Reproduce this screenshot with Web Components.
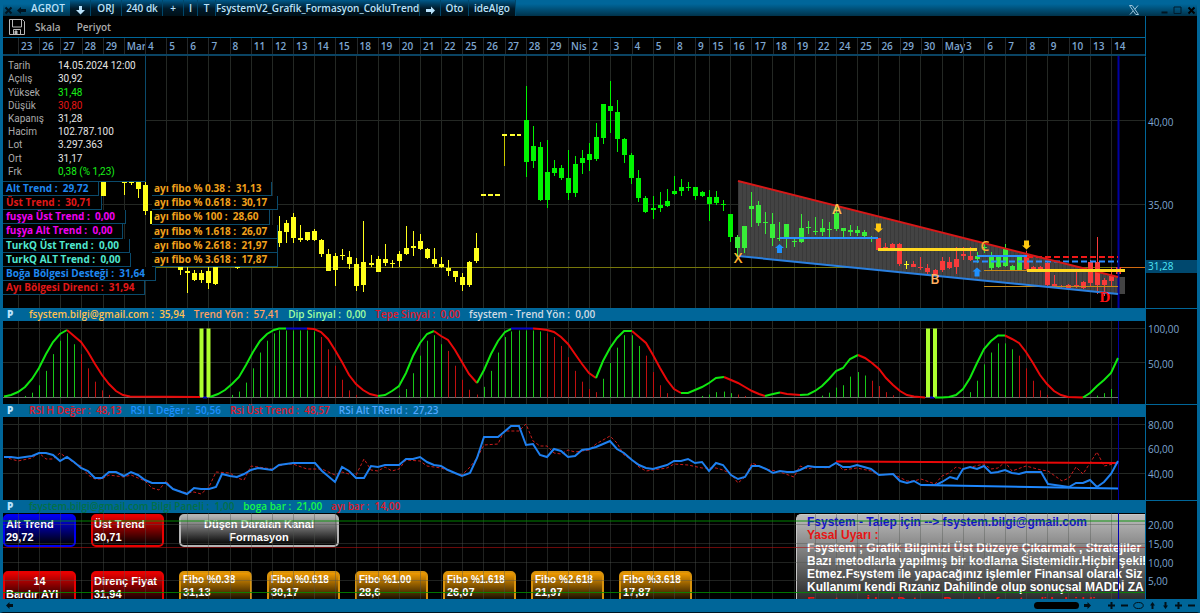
<!DOCTYPE html>
<html lang="tr">
<head>
<meta charset="utf-8">
<title>AGROT 240 dk - FsystemV2</title>
<style>
html, body { margin: 0; height: 100%; background: #000; }
body { font-family: "Open Sans", "Noto Sans", sans-serif; font-size: 10px; }
</style>
</head>
<body>
<app-window></app-window>
<script>
const BLUE = '#006699', LINE = '#0a4a6b';
const make = (tag, html) => customElements.define(tag, class extends HTMLElement {
  connectedCallback() {
    if (this.shadowRoot) return;
    this.attachShadow({ mode: 'open' }).innerHTML = typeof html === 'function' ? html(this) : html;
  }
});

/* ---------- shared chart geometry: one bar every 7.05 units ---------- */
const barX = i => 18 + 7.05 * i;
const days = [];
for (let i = 0; i <= 96; i += 3) days.push(i);
for (let i = 98; i <= 155; i += 3) days.push(i);
const vgrid = (y1, y2) => `<path class="grid" d="${days.map(i => `M${Math.round(barX(i)) + .5} ${y1}V${y2}`).join('')}"/>`;
const hgrid = ys => `<path class="grid" d="${ys.map(y => `M3 ${y}H1145`).join('')}"/>`;
const poly = (pts, color, w = 2, extra = '') => `<polyline points="${pts}" stroke="${color}" stroke-width="${w}" ${extra}/>`;
const svgBox = (y, h, inner) => `<svg viewBox="3 ${y} 1142 ${h}" preserveAspectRatio="none" aria-hidden="true">${inner}</svg>`;
const svgCss = `
  svg { position: absolute; inset: 0; width: 100%; height: 100%; display: block; fill: none; pointer-events: none; }
  svg * { vector-effect: non-scaling-stroke; }
  .grid { stroke: #242824; stroke-width: 1; }`;

/* ---------- title bar ---------- */
make('title-bar', `
<style>
:host { display: flex; height: 16px; background: linear-gradient(#00669a 25%, #00324a); color: #b9e2fb; }
button { all: unset; box-sizing: border-box; flex: none; height: 16px; line-height: 17px; text-align: center; font-size: 10px; font-weight: 600; cursor: pointer;
  background: linear-gradient(#00598a, #001a2a 55%, #001018); border-right: 1px solid #00476b; white-space: nowrap; }
button.bare { background: none; border: 0; }
svg { display: block; margin: 4px auto 0; width: 9px; height: 9px; }
.gap { flex: 1; }
</style>
<button class="bare" style="width:16px" aria-label="Kapat"><svg viewBox="0 0 9 9"><path d="M1.5 1.500l6 6M7.500 1.500l-6 6" stroke="#001420" stroke-width="2"/></svg></button>
<button class="bare" style="width:10px" aria-label="Geri"><svg viewBox="0 0 9 9"><path d="M0 4.500l4-3.500v2h5v3H4v2z" fill="#001420"/></svg></button>
<button class="bare" style="width:44px">AGROT</button>
<button style="width:21px" aria-label="Sembol"><svg viewBox="0 0 9 9"><path d="M3 0h3v4h3L4.500 8.500 0 4h3z" fill="#b9e2fb"/></svg></button>
<button style="width:31px">ORJ</button>
<button style="width:41px">240 dk</button>
<button style="width:21px">+</button>
<button style="width:14px">I</button>
<button style="width:18px">T</button>
<button style="width:204px">FsystemV2_Grafik_Formasyon_CokluTrend</button>
<button style="width:21px" aria-label="İleri"><svg viewBox="0 0 9 9"><path d="M9 4.500L5 .5V3H0v3h5v2.500z" fill="#b9e2fb"/></svg></button>
<button style="width:28px">Oto</button>
<button style="width:47px">ideAlgo</button>
<span class="gap"></span>
<button class="bare" style="width:46px" aria-label="X"><svg style="width:10px;height:10px;margin-top:3px" viewBox="0 0 10 10"><path d="M.5.5h2.700l6.300 9H6.800zM9 .5L5.800 4.300M4.300 5.800L1 9.500" fill="none" stroke="#9cc4da" stroke-width="1"/></svg></button>
<button class="bare" style="width:14px" aria-label="Küçült"><svg viewBox="0 0 9 9"><path d="M1.500 6.500h6" stroke="#001420" stroke-width="2"/></svg></button>
<button class="bare" style="width:12px" aria-label="Büyüt"><svg viewBox="0 0 9 9"><path d="M1 1h7v6.500H1z" fill="none" stroke="#001a2a"/></svg></button>
<button class="bare" style="width:17px" aria-label="Pencereyi kapat"><svg viewBox="0 0 9 9"><path d="M1.500 1.500l6 6M7.500 1.500l-6 6" stroke="#000" stroke-width="2"/></svg></button>
`);

make('tool-bar', `
<style>
:host { display: flex; align-items: center; gap: 16px; height: 22px; padding-left: 6px; box-sizing: border-box; color: #aaa; border-bottom: 1px solid ${BLUE}; }
button { all: unset; font-size: 10px; font-weight: 600; line-height: 16px; cursor: pointer; }
.save { margin-right: -6px; }
svg { display: block; width: 16px; height: 16px; }
</style>
<button class="save" aria-label="Kaydet"><svg viewBox="0 0 16 16" fill="none" stroke="#b8b8b8"><path d="M.5.5h13l2 2v13H.5zM3.500.5v7.500h9V.5M4.500 15.500v-5h7v5"/><path d="M6 12v3.500h2V12z" fill="#b8b8b8"/></svg></button>
<button>Skala</button>
<button>Periyot</button>
`);

const dayNames = '23 26 27 28 29 Mar 4 5 6 7 8 11 12 13 14 15 18 19 20 21 22 25 26 27 28 29 Nis 2 3 4 5 8 9 15 16 17 18 19 22 24 25 26 29 30 May 3 6 7 8 9 10 13 14'.split(' ');
make('date-axis', () => `
<style>
:host { display: flex; height: 18px; box-sizing: border-box; border-bottom: 2px solid #0a4464; color: #7ea6d0; font-weight: 600; font-size: 10px; line-height: 17px; }
span { flex: 3 0 0; min-width: 0; box-shadow: inset 1px 0 #24282a; text-indent: 3px; white-space: nowrap; }
span.short { flex-grow: 2; }
i { flex: 2.130 0 0; }
span:last-child { flex-grow: 4.750; }
</style><i></i>${dayNames.map((d, k) => `<span${k === 32 ? ' class="short"' : ''}>${d}</span>`).join('')}`);

/* ---------- panel: header, drawing area, value axis ---------- */
make('chart-panel', el => {
  const y = +el.dataset.y, h = +el.dataset.h;
  const ticks = (el.dataset.ticks || '').split(' ').filter(Boolean).map(t => t.split('@'));
  return `
<style>
:host { display: grid; grid-template-columns: minmax(0, 1fr) 52px; flex: ${h} 1 ${el.hasAttribute('plain') ? 0 : 13}px; min-height: 0; }
.left { display: flex; flex-direction: column; min-height: 0; }
header { display: flex; gap: 9px; height: 13px; flex: none; background: ${BLUE}; color: #b9e2fb; font-weight: 600; font-size: 10px; line-height: 13px; padding-left: 4px; white-space: pre; overflow: hidden; }
header b { width: 13px; }
.area { position: relative; flex: 1; min-height: 0; overflow: hidden; }
aside { border-left: 1px solid ${BLUE}; border-top: 1px solid ${BLUE}; padding-top: ${el.hasAttribute('plain') ? 0 : 12}px; color: #7ea6d0; font-size: 10px; font-weight: 500; display: flex; }
.scale { position: relative; flex: 1; }
.scale span { position: absolute; left: 2px; line-height: 14px; margin-top: -7px; }
.scale span.now { left: 0; right: 0; padding-left: 2px; line-height: 13px; background: #00486e; color: #4fe6f6; }
:host([plain]) aside { border-top-color: transparent; }
</style>
<div class="left">
${el.hasAttribute('plain') ? '' : '<header><b>P</b><slot name="head"></slot></header>'}
<div class="area"><slot></slot></div></div>
<aside><div class="scale">${ticks.map(([t, ty]) => `<span class="${t === '31,28' ? 'now' : ''}" style="top:${((ty - y) / h * 100).toFixed(2)}%">${t}</span>`).join('')}</div></aside>`;
});

/* ---------- price drawing: bar index, high, top, bottom, low ---------- */
const Y = [[12,182,182,196,196],[15,182,182,183,195],[16,182,182,183,185],[17,182,182,189,198],[18,182,185,211,215],[19,211,211,224,233],
[23,267,267,270,275],[24,267,271,273,293],[25,270,273,280,281],[26,270,273,280,283],[27,267,271,283,289],[28,267,267,284,285],[31,267,267,268,269],
[37,216,231,243,247],[38,220,223,232,243],[39,213,217,238,243],[40,225,238,240,242],[41,232,232,240,241],[42,229,231,240,241],[43,239,240,254,257],[44,249,254,271,271],
[45,253,256,270,286],[46,249,255,255,260],[47,251,257,264,269],[48,258,264,286,291],[49,221,262,285,292],[50,255,263,265,267],[51,256,259,272,272],[52,244,259,263,266],
[53,260,263,264,268],[54,251,254,261,267],[55,226,248,254,255],[56,231,246,248,256],[57,234,241,249,250],[58,248,249,258,259],[59,248,259,264,267],[60,257,264,267,268],
[61,260,268,271,276],[62,271,271,277,282],[63,273,277,285,291],[64,261,262,285,287],[65,233,248,261,263],[126,261,264,265,269]];
const G = [[72,86,120,162,177],[73,126,146,161,168],[74,142,147,200,201],[75,140,172,200,208],[76,160,168,173,176],[77,165,168,178,180],[78,150,178,193,200],[79,156,164,193,197],
[80,150,158,163,174],[81,143,154,160,171],[82,123,137,159,161],[83,104,104,138,144],[84,81,106,111,133],[85,100,112,139,152],[86,138,139,155,163],[87,153,155,178,184],[88,170,178,198,202],
[89,196,198,212,213],[90,196,208,210,219],[91,192,205,208,212],[92,189,201,206,207],[93,176,191,194,195],[94,179,187,191,196],[95,182,187,187,191],[96,187,187,196,200],[97,191,192,196,197],
[98,190,197,204,221],[99,191,197,203,205],[100,200,204,205,211],[101,214,214,237,242],[102,235,237,248,256],[103,226,226,248,253],[104,192,206,209,227],[105,201,205,223,226],[106,212,222,223,234],
[107,213,224,238,246],[108,222,238,239,241],[109,224,224,238,248],[110,238,241,242,247],[111,214,228,242,243],[112,221,227,228,234],[113,217,231,232,235],[114,219,228,232,236],[115,222,229,230,239],
[116,205,213,229,231],[117,228,228,231,239],[118,225,230,232,236],[119,226,230,233,236],[120,230,232,236,238],[121,236,237,238,242],[136,252,256,259,263],[137,244,247,248,253],[138,252,256,268,270],
[139,256,257,267,268],[140,244,249,266,267],[141,265,266,270,271],[142,256,257,270,271]];
const R = [[122,238,238,250,251],[123,243,247,248,251],[124,243,244,249,251],[125,243,244,264,266],[127,261,264,267,267],[128,257,267,268,270],[129,264,268,272,274],[130,269,270,274,274],[131,257,261,270,272],
[132,257,262,268,269],[133,247,259,267,274],[134,247,254,256,260],[135,247,256,260,261],[143,251,255,269,270],[144,266,267,269,269],[145,266,267,269,269],[146,261,263,285,286],[147,275,284,286,287],
[148,285,286,287,288],[149,284,285,288,288],[150,271,285,286,288],[151,281,282,288,289],[152,260,262,283,287],[153,237,262,285,294],[154,278,280,285,296],[155,267,276,281,287],[156,264,267,274,276]];
const candles = (list, color) => `<g stroke="${color}" fill="${color}">` + list.map(([i, h, t, b, l]) => {
  const x = Math.round(barX(i)) - .5;
  return `<path d="M${x} ${h}V${l}"/><rect x="${x - 2.5}" y="${t}" width="5" height="${Math.max(1, b - t)}" stroke="none"/>`;
}).join('') + '</g>';
const down = (x, y) => `<path fill="#ffc810" d="M${x - 2.5} ${y - 4.5}h5v5h2l-4.500 4-4.500-4h2z"/>`;
const up = (x, y) => `<path fill="#1e90ff" d="M${x - 2.5} ${y + 4.5}h5v-5h2l-4.500-4-4.500 4h2z"/>`;

make('price-chart', () => {
  let hatch = '';
  for (let x = 738; x < 1118; x += 4) hatch += `M${x}.5 ${181 + (x - 738) * .253}V${256 + (x - 738) * .1}`;
  const marks = [['X', 738, 258, '#ffb52e'], ['A', 837, 209, '#ffc04d'], ['B', 935, 279, '#ffb060'], ['C', 985, 246, '#ffa52e'], ['D', 1105, 297, '#ff1010']];
  return `<style>
:host { display: block; position: absolute; inset: 0; }
${svgCss}
.mark { position: absolute; transform: translate(-50%, -50%); font-size: 14px; line-height: 16px; font-weight: 600; }
.mark.d { font-family: "Liberation Serif", serif; font-weight: 700; font-size: 15px; }
</style>` + svgBox(56, 252, `
${vgrid(56, 308)}${hgrid([120.5, 204.5])}
<path d="M3 267.500H1118" stroke="#77770a"/><path d="M1118 267.500H1145" stroke="#d06a10"/>
<path d="M738 181L1118 277H1125V294H1118L738 256z" fill="#434343"/>
<path d="${hatch}" stroke="#393939"/>
<g transform="translate(1 0)">${candles(Y, '#ffff1c')}
${candles(G.filter(c => c[0] < 102), '#00f400')}${candles(G.filter(c => c[0] >= 102), '#38ee38')}${candles(R, '#f83a3a')}</g>
<path d="M504.500 134V166" stroke="#c8c800"/>
<path d="M481 195H486M488 195H493M495 195H500M502 135H507M510 135H515M517 135H521" stroke="#ffff30" stroke-width="2"/>
<path d="M1118.500 56V308" stroke="#0000a0" stroke-width="2"/>
<path d="M984 286.500H1118M984 270.500H1027" stroke="#c88a18"/>
<path d="M1027 257H1118" stroke="#f01818" stroke-width="2" stroke-dasharray="6 3"/>
<path d="M973 261.500H1118" stroke="#2a8cff" stroke-width="2" stroke-dasharray="6 3"/>
<path d="M738 181L1118 277" stroke="#d81818" stroke-width="2"/><path d="M738 256L1118 294" stroke="#2a80e0" stroke-width="2"/>
<path d="M780 238H878M977 256H1027" stroke="#2a90ff" stroke-width="2"/>
<path d="M878 249.500H977M1027 270.500H1125" stroke="#ffd820" stroke-width="3"/>
${down(878.5, 228)}${down(1026.5, 245)}${up(779.5, 248.5)}${up(977, 272)}`)
  + marks.map(([t, x, y, c]) => `<span class="mark ${t.toLowerCase()}" style="left:${((x - 3) / 11.42).toFixed(2)}%;top:${((y - 56) / 2.52).toFixed(2)}%;color:${c}">${t}</span>`).join('');
});

make('quote-info', `
<style>
:host { display: block; position: absolute; left: 0; top: 0; width: 143px; height: 126px; box-sizing: border-box; background: #000; border-right: 1px solid ${LINE}; border-bottom: 1px solid ${LINE}; color: #aaa; }
dl { margin: 0; height: 119px; padding: 3px 0 0 5px; display: grid; grid-template-columns: 50px 1fr; grid-auto-rows: 1fr; align-items: center; font: 400 10px/13px Roboto, "Liberation Sans", sans-serif; }
dd { margin: 0; color: #e4e4e4; } .up { color: #18f018; } .dn { color: #e41414; }
</style>
<dl><dt>Tarih</dt><dd>14.05.2024 12:00</dd><dt>Açılış</dt><dd>30,92</dd><dt>Yüksek</dt><dd class="up">31,48</dd><dt>Düşük</dt><dd class="dn">30,80</dd>
<dt>Kapanış</dt><dd>31,28</dd><dt>Hacim</dt><dd>102.787.100</dd><dt>Lot</dt><dd>3.297.363</dd><dt>Ort</dt><dd>31,17</dd><dt>Frk</dt><dd class="up">0,38 (% 1,23)</dd></dl>`);

make('trend-list', el => {
  const fibo = el.hasAttribute('fibo');
  const rows = fibo
    ? ['0.38 :  31,13', '0.618 :  30,17', '100 :  28,60', '1.618 :  26,07', '2.618 :  21,97', '3.618 :  17,87'].map(t => ['ayı fibo % ' + t, '#f0a01c'])
    : [['Alt Trend :  29,72', '#1e88f0'], ['Üst Trend :  30,71', '#e01818'], ['fuşya Üst Trend :  0,00', '#f000f0'], ['fuşya Alt Trend :  0,00', '#f000f0'],
       ['TurkQ Üst Trend :  0,00', '#50e8d0'], ['TurkQ ALT Trend :  0,00', '#50e8d0'], ['Boğa Bölgesi Desteği :  31,64', '#1e88f0'], ['Ayı Bölgesi Direnci :  31,94', '#e01818']];
  return `<style>
:host { position: absolute; top: 126px; left: ${fibo ? 149 : 0}px; height: ${fibo ? 85 : 113}px; display: grid; grid-auto-rows: 1fr; justify-items: start; font-size: 10px; font-weight: 700; line-height: 13px; white-space: pre; }
span { background: #000; border: solid ${LINE}; border-width: 0 1px 1px 0; padding: 0 10px 0 ${fibo ? 2 : 3}px; box-sizing: border-box; }
</style>${rows.map(([t, c]) => `<span style="color:${c}">${t}</span>`).join('')}`;
});

/* ---------- oscillator ---------- */
const waves = [
['g','4,396.5 11,395 18,392 25,387 32,379 39,368 46,354 53,342 60,334 67,330'],['r','67,330 74,336 81,342 88,352 95,364 102,375 109,384 116,391 123,395 130,396.5 200,397'],
['g','210,397 218,394 225,390 232,384 239,377 246,365 253,352 260,341 267,334 274,330 279,328.5 286,328.5'],['b','286,328.5 293,328.5 300,328.5 307,328.5'],
['r','307,328.5 314,329 321,332 328,339 335,350 342,362 349,375 356,384 363,390 370,394 378,396'],['g','378,396 385,395 392,391 399,386 406,373 413,356 420,343 427,334 434,331'],
['r','434,331 441,336 448,340 455,350 462,362 469,374 477,383'],['g','477,383 484,370 491,354 498,341 505,332 511,329'],['b','511,328.5 519,328.5 526,328.5 533,328.5'],
['r','533,328.5 540,329 547,330 554,332 561,337 568,344 575,354 582,364 589,373 596,378'],['g','596,378 603,361 610,348 617,338 624,331 632,331'],
['r','632,331 639,337 646,343 653,355 660,368 667,380 674,389 681,393'],['g','681,393 688,393 695,390 702,387 709,383 716,378 724,377'],
['r','724,377 731,380 738,383 745,387 752,391 759,394 765,396'],['g','765,396 773,394 780,392.5'],['r','780,392.5 787,394 800,395'],
['g','800,395 808,394.5 815,391 822,386 829,379 836,371 843,368 850,359 858,355'],['r','858,355 865,358 872,363 879,369 886,378 893,385 900,391 907,395 914,396.5 925,397.5'],
['g','935,397.5 942,397.5 949,397 956,395 963,389 970,378 977,363 984,349 991,341 998,335.5 1005,335.5'],['r','1005,335.5 1012,339 1019,343 1026,352 1033,363 1040,375 1047,384 1054,391 1061,395 1068,397 1083,397.5'],
['g','1083,397.5 1090,393 1097,386 1104,380 1111,373 1118,358']];
make('wave-chart', () => {
  const ink = { g: '#10e810', r: '#e80808', b: '#0808c8' };
  let bars = '';
  for (const [c, pts] of waves) pts.split(' ').slice(1).forEach((p, n) => {
    const [x, y] = p.split(',').map(Number), v = (397.5 - y) ** 2 / 71;
    if (v > 1) bars += `<path d="M${Math.round(x) + .5} ${397.5 - v}V397.500" stroke="${c === 'r' && n ? '#c01010' : '#18c818'}"/>`;
  });
  return `<style>:host { display: block; position: absolute; inset: 0; }${svgCss}</style>` + svgBox(321, 83, `
${vgrid(321, 404)}${hgrid([328.5, 362.5])}<path d="M3 397.500H1118" stroke="#707070"/>${bars}
<path d="M1118.500 321V404" stroke="#0000a0"/>
<path d="M203 397.500h4M930 397.500h4" stroke="#0808c8" stroke-width="2"/>
<path d="M201.500 328.500V397M208.500 328.500V397M928 328.500V397M935 328.500V397" stroke="#adff2f" stroke-width="4"/>
${waves.map(([c, p]) => poly(p, ink[c])).join('')}`);
});

make('rsi-chart', () => `<style>:host { display: block; position: absolute; inset: 0; }${svgCss}</style>` + svgBox(417, 83, `
${vgrid(417, 500)}${hgrid([424.5, 448.5, 473.5])}<path d="M1118.500 417V500" stroke="#0000a0"/>
${poly('4,457 18,461 32,458 39,453 46,459 53,459 60,453 67,458 74,463 81,466 88,475 95,479 102,479 109,475 124,477 131,475 145,481 152,488 159,490 166,481 173,489 187,493 194,492 201,494 209,487 216,472 230,473 237,478 244,480 251,466 265,468 272,469 279,466 286,464 293,464 307,469 322,469 335,475 342,472 349,474 356,475 364,459 371,470 378,471 385,467 392,471 399,469 406,460 420,461 427,466 441,468 455,473 462,475 470,467 477,458 484,445 498,444 504,431 519,431 526,424 533,441 540,446 547,446 554,453 561,454 568,450 575,452 589,450 596,444 610,436 617,443 624,455 632,460 639,467 646,471 667,468 674,464 688,465 702,468 716,468 723,470 731,474 738,483 745,477 752,463 766,469 780,472 794,477 800,466 808,469 815,467 829,468 836,463 843,470 857,468 871,471 879,475 893,474 907,481 914,481 921,479 935,484 942,476 949,473 956,467 963,469 984,464 991,469 998,468 1005,462 1012,471 1026,466 1041,470 1048,471 1055,476 1062,481 1069,478 1076,467 1083,474 1090,463 1097,452 1104,466 1118,463', '#c81c1c', 1, 'stroke-dasharray="3 2"')}
${poly('836,461.5 1118,463', '#e80808')}${poly('921,485 1118,488.5', '#1e88ff')}
${poly('4,457 11,457 18,458 25,457 32,456 39,453 46,453 53,455 60,461 67,457 74,462 81,468 88,471 95,478 102,478 109,472 116,472 124,476 131,472 138,475 145,480 152,483 166,483 173,489 187,494 194,488 201,489 209,489 216,487 222,474 230,476 237,477 244,474 251,470 258,468 272,470 279,465 286,464 293,463 315,463 322,471 335,482 342,467 349,471 356,478 364,478 371,466 378,467 385,465 399,465 406,459 413,459 420,457 427,462 434,465 441,466 448,470 455,473 462,476 470,473 477,458 484,437 498,437 504,432 511,426 519,426 526,445 533,444 540,455 547,457 554,449 561,451 568,457 575,456 582,450 589,449 596,447 610,441 617,449 624,453 632,460 639,465 646,468 653,469 660,467 667,465 674,461 681,461 688,459 695,463 702,462 709,471 716,463 723,465 731,475 738,479 745,477 752,466 759,466 766,469 773,473 780,471 787,472 794,472 800,470 808,466 815,467 829,467 836,463 843,467 850,467 857,465 864,467 871,469 879,475 893,474 900,481 907,483 914,481 921,485 936,485 942,482 950,477 957,479 963,469 970,467 977,469 984,466 991,473 998,472 1005,470 1012,473 1019,474 1026,472 1041,472 1048,484 1055,485 1069,487 1076,483 1083,483 1090,480 1097,487 1104,482 1111,474 1118,461', '#1e80f0')}`));

/* ---------- information cards ---------- */
make('info-card', `
<style>
:host { --c: #f00; display: block; box-sizing: border-box; height: 33px; border: 2px solid var(--c); border-radius: 5px; background: linear-gradient(var(--c), #000); color: #fff;
  font: 700 11px/13px "Liberation Sans", sans-serif; padding: 2px 1px; white-space: nowrap; overflow: hidden; }
:host([tone="blue"]) { --c: #0000f0; } :host([tone="red"]) { --c: #e80000; }
:host([tone="gold"]) { --c: #f09a00; padding: 0 1px 0 2px; border-color: #d8920c; }
:host([tone="gray"]) { --c: #b4b4b4; text-align: center; }
</style><slot></slot>`);
make('card-board', () => `
<style>
:host { display: block; position: absolute; inset: 0; overflow: hidden; }
.cards { display: grid; grid-template-columns: repeat(8, 73px); column-gap: 15px; row-gap: 24px; padding-top: 1px; }
.wide { grid-column: 3 / span 2; width: 160px; } .next { grid-column-start: 1; } .mid { display: block; text-align: center; }
small { font-size: 10px; }
.legal { position: absolute; left: 793px; right: 0; top: 1px; height: 130px; box-sizing: border-box; border: solid #c8c8c8; border-width: 1px 0 0 1px; border-radius: 5px 0 0 0;
  background: linear-gradient(#bcbcbc, #000 110px); color: #fff; font: 700 12px/13px "Liberation Sans", sans-serif; padding: 1px 0 0 10px; white-space: nowrap; overflow: hidden; }
.legal p { margin: 0; } .legal a { color: #1010d0; text-decoration: none; } .red { color: #e81414; } .legal .last { margin-top: 2px; }
${svgCss} .grid { stroke: rgba(80, 84, 80, .4); }
</style>
<div class="cards">
<info-card tone="blue">Alt Trend<br>29,72</info-card><info-card tone="red">Üst Trend<br>30,71</info-card>
<info-card tone="gray" class="wide">Düşen Daralan Kanal<br>Formasyon</info-card>
<info-card tone="red" class="next"><span class="mid">14</span>Bardır AYI</info-card><info-card tone="red">Direnç Fiyat<br>31,94</info-card>
${[['0.38', '31,13'], ['0.618', '30,17'], ['1.00', '28,6'], ['1.618', '26,07'], ['2.618', '21,97'], ['3.618', '17,87']].map(([a, b]) => `<info-card tone="gold"><small>Fibo %${a}</small><br>${b}</info-card>`).join('')}
</div>
<div class="legal"><p><a href="#talep">Fsystem - Talep için --&gt; fsystem.bilgi@gmail.com</a></p><p class="red">Yasal Uyarı :</p>
<p>Fsystem ; Grafik Bilginizi Üst Düzeye Çıkarmak , Stratejiler</p><p>Bazı metodlarla yapılmış bir kodlama Sistemidir.Hiçbir şekil</p>
<p>Etmez.Fsystem ile yapacağınız işlemler Finansal olarak Siz</p><p>Kullanımı kendi Rızanız Dahilinde olup sonuçsal MADDİ ZA</p>
<p class="red last">Fsystem ; İdeal Data ve Borsalar fsystem'i hak iddia</p></div>
` + svgBox(513, 86, `${vgrid(513, 599)}${hgrid([524.5, 543.5, 562.5, 580.5])}
<path d="M3 521H1145" stroke="#009000" stroke-opacity=".45" stroke-width="2"/><path d="M3 592.500H1145" stroke="#009000" stroke-opacity=".8"/><path d="M3 547.500H1145" stroke="#b01010" stroke-opacity=".6"/>
<path d="M1118.500 513V599" stroke="#0000b0"/>`));

make('status-bar', `
<style>
:host { display: flex; align-items: center; height: 13px; background: ${BLUE}; padding: 0 2px 0 3px; }
button { all: unset; width: 13px; height: 13px; cursor: pointer; }
svg { display: block; width: 9px; height: 9px; margin: 2px; fill: #001018; stroke: #001018; stroke-width: 0; }
.gap { flex: 1; } .thumb { width: 45px; height: 7px; border-radius: 4px; background: #000; margin-right: 2px; } .fwd { margin-right: 11px; }
</style>
<button aria-label="Geri"><svg viewBox="0 0 9 9"><path d="M1 4.500l3.500-3.500v2H8v3H4.500v2z"/></svg></button><span class="gap"></span><span class="thumb"></span>
<button class="fwd" aria-label="İleri"><svg viewBox="0 0 9 9"><path d="M8 4.500L4.500 1v2H1v3h3.500v2z"/></svg></button>
<button aria-label="Genişlet"><svg viewBox="0 0 9 9"><path d="M1 3.500h2.500V1h2v2.500H8v2H5.500V8h-2V5.500H1z"/></svg></button>
<button aria-label="Daralt"><svg viewBox="0 0 9 9"><path d="M1 3.500h7v2H1z"/></svg></button>
<button style="width:15px" aria-label="Sıfırla"><svg viewBox="0 0 11 9" style="width:11px"><ellipse cx="5.500" cy="4.500" rx="4.700" ry="3" fill="none" style="stroke-width:1"/></svg></button>
<button aria-label="Yukarı"><svg viewBox="0 0 9 9"><path d="M4.500 1L7 4.500H5.500V8h-2V4.500H2z"/></svg></button>
<button aria-label="Aşağı"><svg viewBox="0 0 9 9"><path d="M4.500 8L7 4.500H5.500V1h-2v3.500H2z"/></svg></button>
<button aria-label="Yakınlaştır"><svg viewBox="0 0 9 9"><path d="M1 3.500h2.500V1h2v2.500H8v2H5.500V8h-2V5.500H1z"/></svg></button>
<button aria-label="Uzaklaştır"><svg viewBox="0 0 9 9"><path d="M1 3.500h7v2H1z"/></svg></button>`);

const heads = list => list.map(([t, c]) => `<span slot="head" style="color:${c}">${t}</span>`).join('');
make('app-window', () => `
<style>
:host { display: flex; flex-direction: column; height: 100vh; min-height: 480px; box-sizing: border-box; border: solid ${BLUE}; border-width: 0 3px; border-bottom: 1px solid #001420; background: #000; overflow: hidden; }
title-bar { margin: 0 -3px; flex: none; } status-bar { margin: 0 -3px; flex: none; }
.top { display: grid; grid-template-columns: minmax(0, 1fr) 52px; flex: none; }
.top i { border-left: 1px solid ${BLUE}; }
</style>
<title-bar></title-bar>
<div class="top"><div><tool-bar></tool-bar><date-axis></date-axis></div><i></i></div>
<chart-panel plain data-y="56" data-h="252" data-ticks="40,00@121 35,00@205 31,28@267">
<price-chart></price-chart><quote-info></quote-info><trend-list></trend-list><trend-list fibo></trend-list></chart-panel>
<chart-panel data-y="321" data-h="83" data-ticks="100,00@329 50,00@364">
${heads([['fsystem.bilgi@gmail.com :  35,94', '#ffc050'], ['Trend Yön :  57,41', '#ffa060'], ['Dip Sinyal :  0,00', '#a0ffa0'], ['Tepe Sinyal :  0,00', '#e01828'], ['fsystem - Trend Yön :  0,00', '#d0dce4']])}
<wave-chart></wave-chart></chart-panel>
<chart-panel data-y="417" data-h="83" data-ticks="80,00@425 60,00@449 40,00@474">
${heads([['RSI H Değer :  48,13', '#e01828'], ['RSI L Değer :  50,56', '#1e90ff'], ['Rsi Üst Trend :  48,57', '#e01828'], ['RSi Alt TRend :  27,23', '#50a8ff']])}
<rsi-chart></rsi-chart></chart-panel>
<chart-panel data-y="513" data-h="86" data-ticks="20,00@525 15,00@544 10,00@563 5,00@581">
${heads([['fsystem.bilgi@gmail.com Bilgi Paneli :  1,00', '#047048'], ['boga bar :  21,00', '#18f848'], ['ayı bar :  14,00', '#e01828']])}
<card-board></card-board></chart-panel>
<status-bar></status-bar>`);
</script>
</body>
</html>
